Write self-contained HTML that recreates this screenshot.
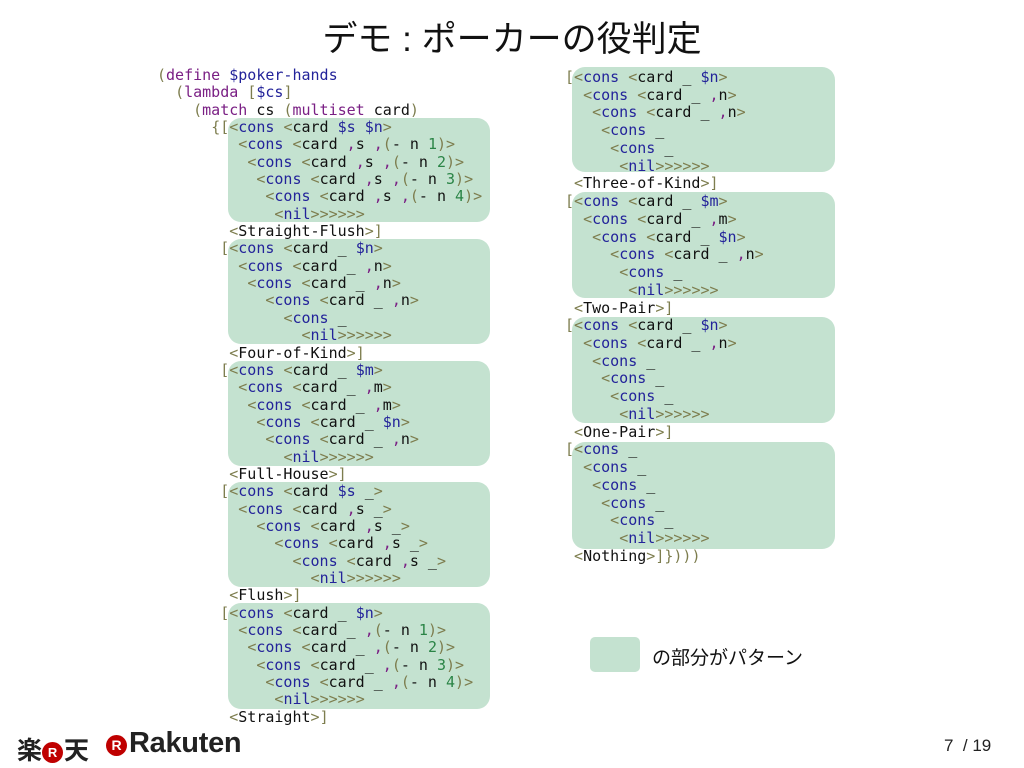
<!DOCTYPE html>
<html><head><meta charset="utf-8"><style>
html,body{margin:0;padding:0;background:#fff;width:1024px;height:768px;overflow:hidden;position:relative;font-family:"Liberation Sans","Noto Sans CJK JP",sans-serif}
.box{position:absolute;background:#c4e2d0;border-radius:13px}
pre{position:absolute;margin:0;font-family:"DejaVu Sans Mono","Liberation Mono",monospace;font-size:15px;color:#111}
.p{color:#7d7d4e}.k{color:#7a1f84}.b{color:#23239a}.g{color:#2a8446}.m{color:#7a1f84}
.t{position:absolute;white-space:nowrap;color:#111}
</style></head><body>
<div class="t" style="left:0;width:1024px;top:11px;text-align:center;font-size:35px;">デモ : ポーカーの役判定</div>

<div class="box" style="left:228px;top:118px;width:262px;height:104px"></div>
<div class="box" style="left:228px;top:239px;width:262px;height:105px"></div>
<div class="box" style="left:228px;top:361px;width:262px;height:105px"></div>
<div class="box" style="left:228px;top:482px;width:262px;height:105px"></div>
<div class="box" style="left:228px;top:603px;width:262px;height:106px"></div>

<div class="box" style="left:572px;top:67px;width:263px;height:105px"></div>
<div class="box" style="left:572px;top:192px;width:263px;height:106px"></div>
<div class="box" style="left:572px;top:317px;width:263px;height:106px"></div>
<div class="box" style="left:572px;top:442px;width:263px;height:107px"></div>

<pre id="L" style="left:157px;top:67px;line-height:17.35px">(define $poker-hands
  (lambda [$cs]
    (match cs (multiset card)
      {[&lt;cons &lt;card $s $n&gt;
         &lt;cons &lt;card ,s ,(- n 1)&gt;
          &lt;cons &lt;card ,s ,(- n 2)&gt;
           &lt;cons &lt;card ,s ,(- n 3)&gt;
            &lt;cons &lt;card ,s ,(- n 4)&gt;
             &lt;nil&gt;&gt;&gt;&gt;&gt;&gt;
        &lt;Straight-Flush&gt;]
       [&lt;cons &lt;card _ $n&gt;
         &lt;cons &lt;card _ ,n&gt;
          &lt;cons &lt;card _ ,n&gt;
            &lt;cons &lt;card _ ,n&gt;
              &lt;cons _
                &lt;nil&gt;&gt;&gt;&gt;&gt;&gt;
        &lt;Four-of-Kind&gt;]
       [&lt;cons &lt;card _ $m&gt;
         &lt;cons &lt;card _ ,m&gt;
          &lt;cons &lt;card _ ,m&gt;
           &lt;cons &lt;card _ $n&gt;
            &lt;cons &lt;card _ ,n&gt;
              &lt;nil&gt;&gt;&gt;&gt;&gt;&gt;
        &lt;Full-House&gt;]
       [&lt;cons &lt;card $s _&gt;
         &lt;cons &lt;card ,s _&gt;
           &lt;cons &lt;card ,s _&gt;
             &lt;cons &lt;card ,s _&gt;
               &lt;cons &lt;card ,s _&gt;
                 &lt;nil&gt;&gt;&gt;&gt;&gt;&gt;
        &lt;Flush&gt;]
       [&lt;cons &lt;card _ $n&gt;
         &lt;cons &lt;card _ ,(- n 1)&gt;
          &lt;cons &lt;card _ ,(- n 2)&gt;
           &lt;cons &lt;card _ ,(- n 3)&gt;
            &lt;cons &lt;card _ ,(- n 4)&gt;
             &lt;nil&gt;&gt;&gt;&gt;&gt;&gt;
        &lt;Straight&gt;]</pre>

<pre id="R" style="left:565px;top:69px;line-height:17.74px">[&lt;cons &lt;card _ $n&gt;
  &lt;cons &lt;card _ ,n&gt;
   &lt;cons &lt;card _ ,n&gt;
    &lt;cons _
     &lt;cons _
      &lt;nil&gt;&gt;&gt;&gt;&gt;&gt;
 &lt;Three-of-Kind&gt;]
[&lt;cons &lt;card _ $m&gt;
  &lt;cons &lt;card _ ,m&gt;
   &lt;cons &lt;card _ $n&gt;
     &lt;cons &lt;card _ ,n&gt;
      &lt;cons _
       &lt;nil&gt;&gt;&gt;&gt;&gt;&gt;
 &lt;Two-Pair&gt;]
[&lt;cons &lt;card _ $n&gt;
  &lt;cons &lt;card _ ,n&gt;
   &lt;cons _
    &lt;cons _
     &lt;cons _
      &lt;nil&gt;&gt;&gt;&gt;&gt;&gt;
 &lt;One-Pair&gt;]
[&lt;cons _
  &lt;cons _
   &lt;cons _
    &lt;cons _
     &lt;cons _
      &lt;nil&gt;&gt;&gt;&gt;&gt;&gt;
 &lt;Nothing&gt;]})))</pre>

<div class="box" style="left:590px;top:637px;width:50px;height:35px;border-radius:5px"></div>
<div class="t" style="left:652px;top:643px;font-size:19px;">の部分がパターン</div>

<div class="t" style="left:17px;top:731px;font-size:25px;font-weight:bold;color:#222;letter-spacing:-1px">楽<span style="display:inline-block;width:21px;height:21px;border-radius:50%;background:#bf0000;color:#fff;font-size:13px;text-align:center;line-height:21px;vertical-align:2px;margin:0 1px;letter-spacing:0">R</span>天</div>
<div class="t" style="left:106px;top:727px;font-size:29px;font-weight:bold;color:#222;letter-spacing:-0.3px"><span style="display:inline-block;width:21px;height:21px;border-radius:50%;background:#bf0000;color:#fff;font-size:14px;text-align:center;line-height:21px;vertical-align:2px;margin-right:2px;letter-spacing:0">R</span>Rakuten</div>
<div class="t" style="left:944px;top:736px;font-size:17px;color:#222">7&nbsp; / 19</div>

<script>
function col(id){
 var el=document.getElementById(id);
 var s=el.textContent;
 var out='';
 var re=/(\$[A-Za-z\-]+)|(\b(?:define|lambda|match|multiset)\b)|(\b(?:cons|nil)\b)|([\(\)\[\]\{\}<>])|(,)|(\d)|([^\$\(\)\[\]\{\}<>,\d]+?(?=[\$\(\)\[\]\{\}<>,\d]|\b(?:define|lambda|match|multiset|cons|nil)\b|$))|([\s\S])/g;
 var m;
 function esc(t){return t.replace(/&/g,'&amp;').replace(/</g,'&lt;').replace(/>/g,'&gt;');}
 while((m=re.exec(s))!==null){
  if(m[0]==='')break;
  if(m[1])out+='<span class="b">'+esc(m[1])+'</span>';
  else if(m[2])out+='<span class="k">'+m[2]+'</span>';
  else if(m[3])out+='<span class="b">'+m[3]+'</span>';
  else if(m[4])out+='<span class="p">'+esc(m[4])+'</span>';
  else if(m[5])out+='<span class="m">,</span>';
  else if(m[6])out+='<span class="g">'+m[6]+'</span>';
  else out+=esc(m[0]);
 }
 el.innerHTML=out;
}
col('L');col('R');
</script>
</body></html>
